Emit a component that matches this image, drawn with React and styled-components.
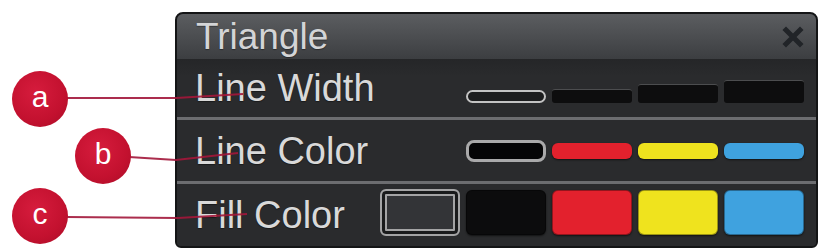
import React from "react";
import styled, { createGlobalStyle } from "styled-components";

const Global = createGlobalStyle`
  html, body { margin: 0; padding: 0; background: #ffffff; }
  body { font-family: "Liberation Sans", Arial, sans-serif; }
`;

const Stage = styled.div`
  position: relative;
  width: 823px;
  height: 248px;
  overflow: hidden;
  box-sizing: border-box;
  padding: 12px 5px 0 175px;
  background: #ffffff;
`;

const Panel = styled.div`
  height: 236px;
  box-sizing: border-box;
  border: 2px solid #141516;
  border-radius: 8px 8px 6px 6px;
  background: #2a2b2d;
  overflow: hidden;
  display: flex;
  flex-direction: column;
`;

const TitleBar = styled.div`
  height: 45px;
  flex: none;
  display: flex;
  align-items: center;
  justify-content: space-between;
  padding: 0 12px 0 19px;
  background: linear-gradient(#5b5d60 0%, #4a4c4f 55%, #3c3e41 100%);
`;

const Title = styled.span`
  font-size: 37px;
  line-height: 40px;
  color: #d3d4d6;
  text-shadow: 0 1px 1px rgba(0, 0, 0, 0.35);
`;

const Close = styled.svg`
  width: 22px;
  height: 22px;
  display: block;
`;

const Row = styled.div`
  height: ${(p) => p.$h}px;
  flex: none;
  display: grid;
  grid-template-columns: 1fr repeat(5, 80px);
  column-gap: 6px;
  align-items: center;
  padding: 0 12px 0 18px;
  border-top: ${(p) => (p.$sep ? "3px solid #6c6d70" : "none")};
  background: ${(p) => (p.$first ? "linear-gradient(#252628, #2a2b2d 30%)" : "#2a2b2d")};
`;

const Label = styled.span`
  grid-column: ${(p) => (p.$wide ? "1 / 3" : "1 / 2")};
  font-size: 38px;
  line-height: 42px;
  color: #d9d9d9;
  white-space: nowrap;
  text-shadow: 0 1px 1px rgba(0, 0, 0, 0.4);
`;

const WidthPill = styled.div`
  align-self: end;
  margin-bottom: 14px;
  height: ${(p) => p.$h}px;
  box-sizing: border-box;
  border-radius: ${(p) => (p.$outlined ? "7px" : "3px")};
  border: ${(p) => (p.$outlined ? "2px solid #c3c3c3" : "none")};
  border-top: ${(p) => (p.$outlined ? "2px solid #c3c3c3" : "1px solid #4c4d4f")};
  background: ${(p) => (p.$outlined ? "#1c1d1e" : "#0d0d0e")};
`;

const ColorPill = styled.div`
  height: ${(p) => (p.$outlined ? 22 : 16)}px;
  box-sizing: border-box;
  border-radius: ${(p) => (p.$outlined ? "8px" : "6px")};
  border: ${(p) => (p.$outlined ? "3px solid #a9a9aa" : "none")};
  background: ${(p) => p.$color};
  box-shadow: ${(p) => (p.$outlined ? "none" : "0 1px 2px rgba(0,0,0,0.6)")};
`;

const FillSwatch = styled.div`
  height: ${(p) => (p.$outlined ? 47 : 45)}px;
  margin-top: ${(p) => (p.$outlined ? -5 : -6)}px;
  box-sizing: border-box;
  border-radius: 6px;
  background: ${(p) => p.$color};
  border: ${(p) => (p.$outlined ? "2px solid #a4a4a5" : "1px solid rgba(0,0,0,0.35)")};
  box-shadow: ${(p) =>
    p.$outlined
      ? "inset 0 0 0 3px #1a1b1c, inset 0 0 0 5px #a4a4a5"
      : "0 1px 2px rgba(0,0,0,0.6)"};
`;

const Overlay = styled.svg`
  position: absolute;
  left: 0;
  top: 0;
  width: 823px;
  height: 248px;
  pointer-events: none;
`;

const Badge = styled.div`
  position: absolute;
  left: ${(p) => p.$x - 28}px;
  top: ${(p) => p.$y - 28}px;
  width: 56px;
  height: 56px;
  border-radius: 50%;
  background: radial-gradient(circle at 42% 38%, #d61c3d 0%, #c3112f 60%, #a90c27 100%);
  color: #ffffff;
  font-size: 30px;
  line-height: 1;
  display: flex;
  align-items: center;
  justify-content: center;
  padding-bottom: 4px;
  box-sizing: border-box;
`;

const widths = [
  { h: 13, outlined: true },
  { h: 14 },
  { h: 19 },
  { h: 23 },
];

const lineColors = [
  { c: "#050506", outlined: true },
  { c: "#e3212d" },
  { c: "#efe31e" },
  { c: "#3fa2df" },
];

const fillColors = [
  { c: "#333437", outlined: true },
  { c: "#0c0c0d" },
  { c: "#e3212d" },
  { c: "#efe31e" },
  { c: "#3fa2df" },
];

export default function App() {
  return (
    <>
      <Global />
      <Stage>
        <Panel>
          <TitleBar>
            <Title>Triangle</Title>
            <Close viewBox="0 0 22 22">
              <path d="M4 4 L18 18 M18 4 L4 18" stroke="#212428" strokeWidth="5" strokeLinecap="square" />
            </Close>
          </TitleBar>
          <Row $h={58} $first>
            <Label $wide>Line Width</Label>
            {widths.map((w, i) => (
              <WidthPill key={i} $h={w.h} $outlined={w.outlined} />
            ))}
          </Row>
          <Row $h={61} $sep>
            <Label $wide>Line Color</Label>
            {lineColors.map((c, i) => (
              <ColorPill key={i} $color={c.c} $outlined={c.outlined} />
            ))}
          </Row>
          <Row $h={62} $sep>
            <Label>Fill Color</Label>
            {fillColors.map((c, i) => (
              <FillSwatch key={i} $color={c.c} $outlined={c.outlined} />
            ))}
          </Row>
        </Panel>
        <Overlay viewBox="0 0 823 248">
          <g fill="none" stroke="#a3173a" strokeWidth="2" opacity="0.9">
            <path d="M66 98 L176 98 L243 94" />
            <path d="M129 157 L176 160 L238 153" />
            <path d="M66 217 L178 218 L247 214" />
          </g>
        </Overlay>
        <Badge $x={40} $y={99}>a</Badge>
        <Badge $x={103} $y={156}>b</Badge>
        <Badge $x={40} $y={216}>c</Badge>
      </Stage>
    </>
  );
}
